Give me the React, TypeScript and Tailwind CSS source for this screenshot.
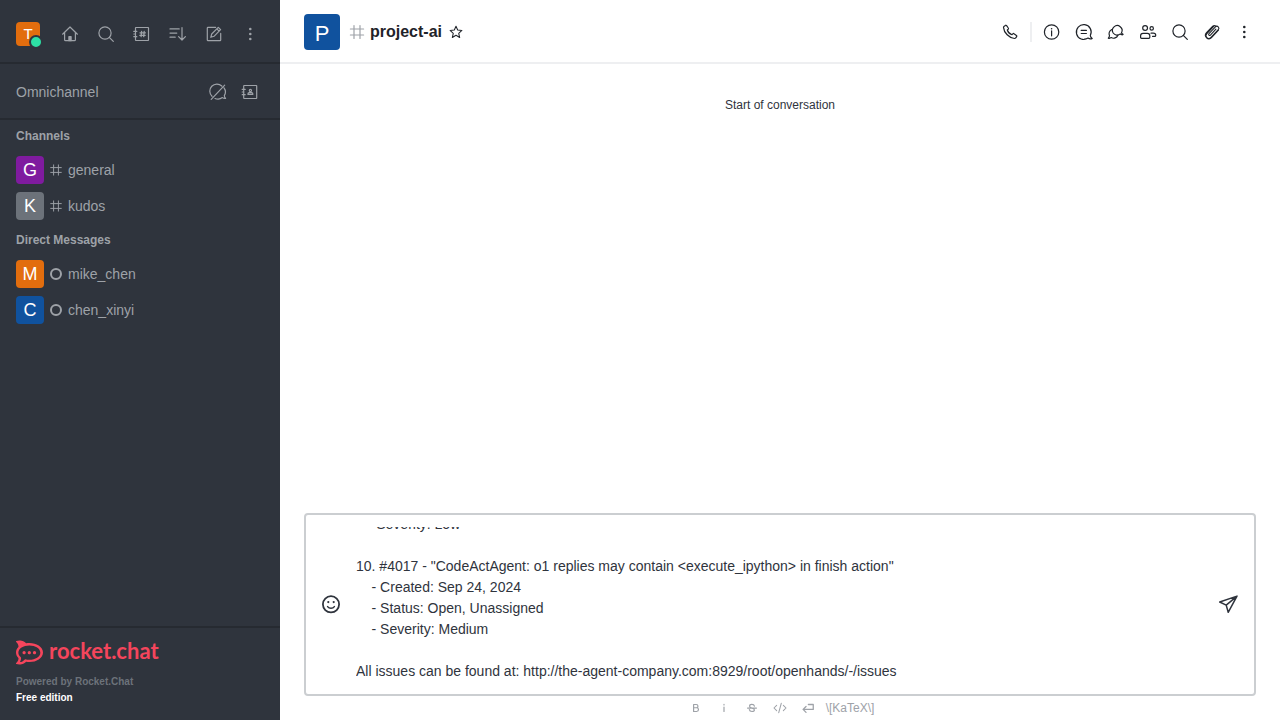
import { useLayoutEffect, useRef } from "react";
import type { ReactNode } from "react";
import { SiRocketdotchat } from "react-icons/si";

const icons: Record<string, ReactNode> = {
  home: (
    <>
      <path d="M2.6 10.2 10 3l7.4 7.2M4.6 8.6v7.1c0 .6.4 1 1 1h8.8c.6 0 1-.4 1-1V8.6" />
      <path d="M8.9 16.7v-4h2.2v4z" fill="currentColor" />
    </>
  ),
  search: (
    <>
      <circle cx="9" cy="9" r="6.1" />
      <path d="m13.3 13.3 4 4" />
    </>
  ),
  directory: (
    <>
      <rect x="3.5" y="3.5" width="13" height="13" rx=".4" />
      <path d="M1.8 7.4h3M1.8 10h1.7M1.8 12.7h3" />
      <path strokeWidth="1.3" d="M9.6 7.4l-.5 5.2M12.2 7.4l-.5 5.2M8 8.8h5.4M7.8 11.3h5.4" />
    </>
  ),
  sort: <path d="M2 4.9h9.2M2 9.1h6.8M2 13.2h5.2M14 3.6v12.2M10.6 12.6l3.4 3.4 3.4-3.4" />,
  edit: (
    <>
      <path d="M11.6 3.4H4c-.4 0-.7.3-.7.7V16c0 .4.3.7.7.7h12c.4 0 .7-.3.7-.7V9.4" />
      <path d="m6.8 13.3.9-3.3 6.6-6.6 2.3 2.3-6.6 6.6zM12.8 4.9l2.3 2.3" />
    </>
  ),
  kebab: (
    <g fill="currentColor" stroke="none">
      <circle cx="10.3" cy="5" r="1.3" />
      <circle cx="10.3" cy="10" r="1.3" />
      <circle cx="10.3" cy="15" r="1.3" />
    </g>
  ),
  omniOff: (
    <path d="M13.8 4a7 7 0 0 0-9.8 10.3M16 5.8a7 7 0 0 1 .3 7.8c0 1.3.5 2.1 1.3 2.8-1.2.2-2.3-.1-3.2-.8a7.3 7.3 0 0 1-7.4.9M16.7 3.2 3.2 17.3" />
  ),
  contacts: (
    <>
      <rect x="3.7" y="3.5" width="13" height="13" rx=".4" />
      <path d="M2.2 7.4h3M2.2 10h1.5M2.2 12.7h3" />
      <circle cx="10.4" cy="8.5" r="1.1" />
      <path d="M8 12.4v-.6c0-.7.5-1.1 1.2-1.1h2.4c.7 0 1.2.4 1.2 1.1v.6z" />
    </>
  ),
  hash: <path d="M7 3.6v12.8M13 3.6v12.8M3.4 7h13.2M3.4 13h13.2" />,
  star: <path d="m10 2.8 2.1 4.8 5.3.5-4 3.6 1.2 5.2-4.6-2.8-4.6 2.8 1.2-5.2-4-3.6 5.3-.5z" strokeWidth="1.3" />,
  phone: (
    <path d="M3.5 5.4c0-.5.3-.9.7-1.2l1.2-.8c.4-.3.9-.2 1.2.2l1.7 2.4c.3.4.2.9-.1 1.2l-.9.8c.5 1.7 2.9 4.1 4.7 4.7l.8-.9c.3-.4.8-.4 1.2-.1l2.4 1.7c.4.3.5.8.2 1.2l-.8 1.2c-.3.5-.8.7-1.3.7-5.2-.3-10.7-5.9-11-11.1z" />
  ),
  info: (
    <>
      <circle cx="9.6" cy="10" r="7.2" />
      <path d="M9.6 8.8v5" />
      <circle cx="9.6" cy="6.7" r=".8" fill="currentColor" stroke="none" />
    </>
  ),
  threads: (
    <path d="M14 16.1a7.4 7.4 0 1 1 2.3-2.6c.1 1.3.8 2.2 1.9 2.9-1.3.9-2.9.6-4.2-.3zM14 16.1a8 8 0 0 1-3.5 1.1M7.2 8.4h5.2M7.2 11.5h5.2" />
  ),
  discussion: (
    <>
      <path d="M7.2 11a4.8 4.8 0 1 1 8.3-.3c.3.9.8 1.4 1.6 1.7-.8.8-2 .4-2.8-.5a4.8 4.8 0 0 1-7.1-.9z" />
      <path d="M5.8 7.5a4.6 4.6 0 0 0-2.3 6.2c-.1 1-.6 1.8-1.2 2.4 1 .4 2.1.1 2.9-.5a4.7 4.7 0 0 0 6.7-2.4" />
    </>
  ),
  members: (
    <>
      <circle cx="7.1" cy="6" r="2.4" />
      <circle cx="13.7" cy="6.4" r="1.7" />
      <path d="M2.6 13.7c0-1.5 1-2.4 2.4-2.4h4.4c1.4 0 2.4.9 2.4 2.4v1.6c0 .6-.4 1-1 1H3.6c-.6 0-1-.4-1-1zM13 11.2h2.3c1.5 0 2.4.8 2.4 2v.2c0 .6-.4 1-1 1h-2.1" />
    </>
  ),
  clip: (
    <path
      strokeWidth="1.1"
      d="m13.9 7.2-5.5 5.9c-1 1-2.4-.3-1.4-1.4l6.4-6.8c1.9-1.9 4.7.7 2.9 2.7L9 15.4c-2.8 2.9-6.8-.8-4.1-3.8l7-7.4M4.6 15.8c-1.5-1.5-1.5-3.6-.1-5.1l6.3-6.6c.9-.8 2-.8 3-.2M4.6 15.8c1.4 1.4 3.5 1.4 4.9-.1l7-7.5"
    />
  ),
  emoji: (
    <g strokeWidth="1.8">
      <circle cx="10" cy="9.3" r="8.1" />
      <path d="M6.6 11.6c1.6 2.2 5.2 2.2 6.8 0" strokeWidth="1.5" />
      <circle cx="7.3" cy="7.1" r="1.1" fill="currentColor" stroke="none" />
      <circle cx="12.7" cy="7.1" r="1.1" fill="currentColor" stroke="none" />
    </g>
  ),
  send: <path strokeWidth="1.5" d="M1.7 7 19 1.1l-8.8 16.2-2-7.2zM8.2 10.1 18.8 1.3" />,
  bold: <path strokeWidth="2" d="M6 4.2h4.4c3.8 0 3.8 5.4 0 5.4H6zM6 9.6h5c4.2 0 4.2 6.2 0 6.2H6z" />,
  italic: <path strokeWidth="2" d="M10 8.4v7.4M10 4v1" />,
  strike: (
    <path strokeWidth="2" d="M2.6 10.2h14.8M14 6.8c-.8-3.7-8-3.5-8 .1 0 2 1.6 2.7 4 3.2 2.6.6 4 1.4 4 3.1 0 3.6-7.8 3.6-8.4-.4" />
  ),
  code: <path strokeWidth="1.5" d="m5.2 6.2-3.8 3.8 3.8 3.8M14.8 6.2l3.8 3.8-3.8 3.8M11.8 3.4 8.2 16.6" />,
  enter: <path strokeWidth="1.8" d="M10.5 5h7v7H3M7.2 7.8 3 12l4.2 4.2" />,
};

function Icon({ name, className = "size-5" }: { name: string; className?: string }) {
  return (
    <svg
      viewBox="0 0 20 20"
      fill="none"
      stroke="currentColor"
      strokeWidth="1.2"
      strokeLinecap="round"
      strokeLinejoin="round"
      aria-hidden="true"
      className={`shrink-0 ${className}`}
    >
      {icons[name]}
    </svg>
  );
}

function IconButton({ icon, label }: { icon: string; label: string }) {
  return (
    <button type="button" aria-label={label} className="flex size-7 items-center justify-center">
      <Icon name={icon} />
    </button>
  );
}

function SectionTitle({ children }: { children: ReactNode }) {
  return <h2 className="flex h-8 items-center px-4 text-xs font-bold">{children}</h2>;
}

function RoomLink({ name, color, direct }: { name: string; color: string; direct?: boolean }) {
  return (
    <li>
      <a href={`#${name}`} className="flex h-9 items-center gap-1 px-4 text-sm">
        <span className={`flex size-7 items-center justify-center rounded text-lg text-white ${color}`}>
          {name[0].toUpperCase()}
        </span>
        {direct ? (
          <span className="flex size-4 items-center justify-center">
            <span className="size-3 rounded-full border-2 border-[#9ea2a8]" />
          </span>
        ) : (
          <Icon name="hash" className="size-4" />
        )}
        <span>{name}</span>
      </a>
    </li>
  );
}

function Sidebar() {
  return (
    <aside className="flex w-70 shrink-0 flex-col bg-[#2f343d] text-[#9ea2a8]">
      <div className="flex h-16 items-center border-b-2 border-[#262a31] px-4 pt-1.5">
        <button
          type="button"
          aria-label="User menu"
          className="relative mr-4 flex size-6 items-center justify-center rounded bg-[#e26d0e] text-[15px] text-white"
        >
          T
          <span className="absolute -right-[3px] -bottom-[3px] size-[14px] rounded-full border-2 border-[#2f343d] bg-[#2de0a5]" />
        </button>
        <nav aria-label="Toolbar" className="flex gap-2">
          <IconButton icon="home" label="Home" />
          <IconButton icon="search" label="Search" />
          <IconButton icon="directory" label="Directory" />
          <IconButton icon="sort" label="Display" />
          <IconButton icon="edit" label="Create new" />
          <IconButton icon="kebab" label="More" />
        </nav>
      </div>
      <div className="flex h-14 items-center justify-between border-b-2 border-[#262a31] px-4 pt-0.5">
        <span className="text-sm">Omnichannel</span>
        <div className="flex gap-1">
          <IconButton icon="omniOff" label="Turn on answer chats" />
          <IconButton icon="contacts" label="Contact center" />
        </div>
      </div>
      <div className="flex-1">
        <SectionTitle>Channels</SectionTitle>
        <ul>
          <RoomLink name="general" color="bg-[#7f1b9f]" />
          <RoomLink name="kudos" color="bg-[#6c727a]" />
        </ul>
        <SectionTitle>Direct Messages</SectionTitle>
        <ul>
          <RoomLink name="mike_chen" color="bg-[#e26d0e]" direct />
          <RoomLink name="chen_xinyi" color="bg-[#10529e]" direct />
        </ul>
      </div>
      <footer className="border-t-2 border-[#262a31] px-4 pt-3 pb-3.5">
        <a href="#home" className="flex h-6 items-center gap-1.5 text-[#f5455c]">
          <SiRocketdotchat size={27} aria-hidden="true" className="shrink-0" />
          <span className="pb-0.5 font-[Lato,sans-serif] text-[22px] leading-6 font-bold">rocket.chat</span>
        </a>
        <p className="mt-2.5 text-[10px] leading-4 font-bold text-[#6c727a]">Powered by Rocket.Chat</p>
        <p className="text-[10px] leading-4 font-bold text-white">Free edition</p>
      </footer>
    </aside>
  );
}

const draft = `   - Severity: Low

10. #4017 - "CodeActAgent: o1 replies may contain <execute_ipython> in finish action"
    - Created: Sep 24, 2024
    - Status: Open, Unassigned
    - Severity: Medium

All issues can be found at: http://the-agent-company.com:8929/root/openhands/-/issues`;

function Composer() {
  const ref = useRef<HTMLTextAreaElement>(null);
  useLayoutEffect(() => {
    if (ref.current) ref.current.scrollTop = ref.current.scrollHeight;
  }, []);
  return (
    <div className="px-6">
      <div className="flex items-center rounded border-2 border-[#cbced1] px-3 py-3">
        <button type="button" aria-label="Emoji" className="flex h-7 w-[26px] items-center justify-center">
          <Icon name="emoji" />
        </button>
        <textarea
          ref={ref}
          aria-label="Message"
          defaultValue={draft}
          spellCheck={false}
          className="ml-3 block h-[155px] flex-1 resize-none text-sm leading-[21px] outline-none [scrollbar-width:none]"
        />
        <button type="button" aria-label="Send" className="flex size-7 items-center justify-center">
          <Icon name="send" />
        </button>
      </div>
      <div className="flex h-6 items-center justify-center gap-2 text-xs text-[#9ea2a8]">
        {["bold", "italic", "strike", "code", "enter"].map((name) => (
          <button key={name} type="button" aria-label={name} className="flex size-5 items-center justify-center">
            <Icon name={name} className={name === "code" || name === "enter" ? "size-3.5" : "size-3"} />
          </button>
        ))}
        <a href="#katex">\[KaTeX\]</a>
      </div>
    </div>
  );
}

export default function App() {
  return (
    <div className="flex h-screen bg-white font-['Liberation_Sans',Arial,sans-serif] text-[#2f343d]">
      <Sidebar />
      <main className="flex min-w-0 flex-1 flex-col">
        <header className="flex h-16 shrink-0 items-center border-b-2 border-[#eeeff1] pt-0.5 pr-[22px] pl-6 text-[#1f2329]">
          <span className="flex size-9 items-center justify-center rounded bg-[#10529e] pt-0.5 text-[22px] text-white">
            P
          </span>
          <Icon name="hash" className="ml-[7px] size-5 text-[#9ea2a8]" />
          <h1 className="ml-[3px] text-base font-bold">project-ai</h1>
          <button type="button" aria-label="Favorite" className="ml-1.5">
            <Icon name="star" className="size-4" />
          </button>
          <div className="ml-auto flex items-center gap-1">
            <IconButton icon="phone" label="Call" />
            <span className="mx-0.5 h-5 w-0.5 bg-[#eeeff1]" />
            <IconButton icon="info" label="Room information" />
            <IconButton icon="threads" label="Threads" />
            <IconButton icon="discussion" label="Discussion" />
            <IconButton icon="members" label="Members" />
            <IconButton icon="search" label="Search messages" />
            <IconButton icon="clip" label="Files" />
            <IconButton icon="kebab" label="Options" />
          </div>
        </header>
        <div className="flex-1 overflow-hidden pt-8 text-center text-xs leading-[18px]">Start of conversation</div>
        <Composer />
      </main>
    </div>
  );
}
